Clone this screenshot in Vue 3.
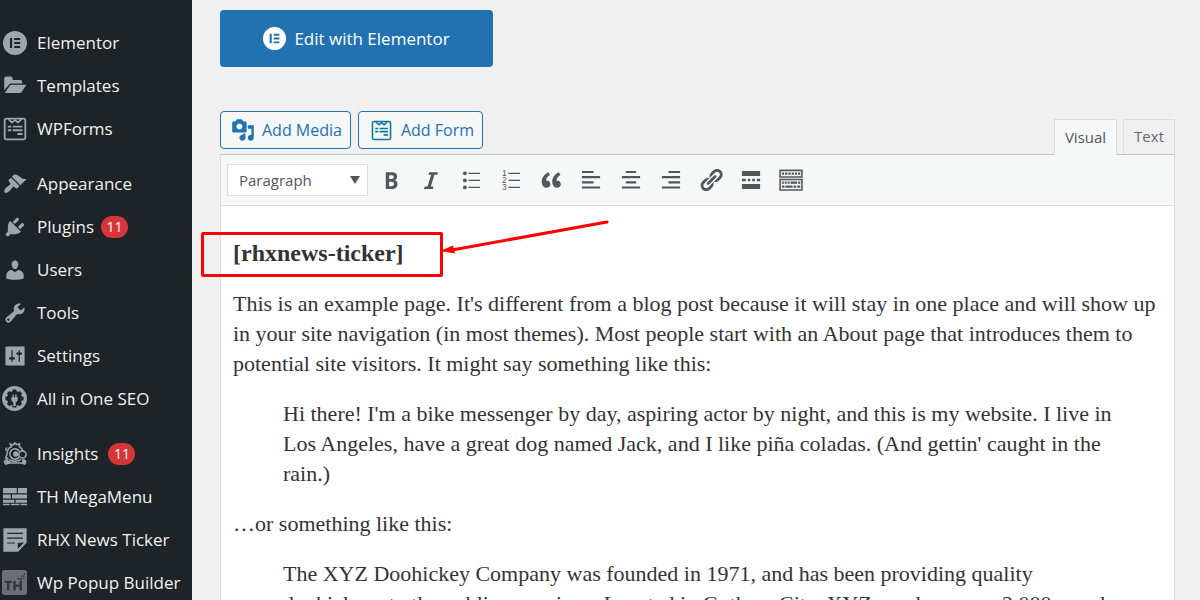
<script setup>
import { ref } from 'vue'

const menu = [
  [
    { label: 'Elementor', icon: 'elementor' },
    { label: 'Templates', icon: 'folder' },
    { label: 'WPForms', icon: 'form' },
  ],
  [
    { label: 'Appearance', icon: 'brush' },
    { label: 'Plugins', icon: 'plug', count: 11 },
    { label: 'Users', icon: 'user' },
    { label: 'Tools', icon: 'wrench' },
    { label: 'Settings', icon: 'sliders' },
    { label: 'All in One SEO', icon: 'seo' },
  ],
  [
    { label: 'Insights', icon: 'monster', count: 11, wide: true },
    { label: 'TH MegaMenu', icon: 'bricks' },
    { label: 'RHX News Ticker', icon: 'note' },
    { label: 'Wp Popup Builder', icon: 'th' },
  ],
]

const icons = {
  elementor:
    '<path fill-rule="evenodd" d="M10 0a10 10 0 1 0 0 20a10 10 0 0 0 0-20zM5.8 5.8h1.8v8.4H5.8zM9.3 5.8h5v1.7h-5zM9.3 9.1h5v1.7h-5zM9.3 12.5h5v1.7h-5z"/>',
  folder:
    '<path d="M1 13.5V3.6C1 2.7 1.7 2 2.6 2h3.8c.9 0 1.6.7 1.6 1.6V5h6.400c.9 0 1.600.7 1.600 1.600V8H7.200c-.9 0-1.700.4-2.300 1.100z"/><path d="M1.400 15.900L5.600 9.800c.4-.5.9-.8 1.600-.8H19.500L15.600 15c-.4.6-1 .9-1.700.9z"/>',
  form:
    '<rect x="1.400" y="1.400" width="17.200" height="17.200" rx="1.500" fill="none" stroke="currentColor" stroke-width="1.500"/><path fill="none" stroke="currentColor" stroke-width="1.400" d="M4.500 1.800l3 2.800L10 2.600l2.500 2 3-2.800"/><path d="M4 7.300h3v1.500H4zM8.200 7.300h8v1.500h-8zM4 10.300h3v1.500H4zM8.200 10.300h8v1.500h-8zM12 13.300h4.200v1.700H12z"/>',
  brush:
    '<path d="M14.480 11.060L7.410 3.990l1.500-1.500c.5-.56 2.300-.47 3.510.32 1.210.8 1.430 1.280 2.910 2.100 1.180.64 2.450 1.260 4.450.85zm-.71.71L6.700 4.700 4.930 6.470c-.39.39-.39 1.020 0 1.410l1.060 1.060c.39.39.39 1.030 0 1.420-.6.6-1.430 1.110-2.210 1.690-.35.26-.7.53-1.010.84C1.430 14.230.4 16.080 1.400 17.070c.99 1 2.840-.03 4.180-1.360.31-.31.58-.66.85-1.020.57-.78 1.080-1.610 1.690-2.210.39-.39 1.020-.39 1.410 0l1.060 1.060c.39.39 1.020.39 1.410 0z"/>',
  plug:
    '<path d="M13.110 4.360L9.870 7.600 8 5.730l3.240-3.240c.35-.34 1.050-.2 1.560.32.52.51.66 1.210.31 1.550zm-8 1.770l.91-1.120 9.010 9.010-1.190.84c-.71.71-2.630 1.160-3.820 1.160H6.140L4.900 17.260c-.59.59-1.540.59-2.120 0-.59-.58-.59-1.530 0-2.120l1.240-1.240v-3.880c0-1.130.4-3.190 1.090-3.890zm7.260 3.970l3.240-3.240c.34-.35 1.040-.21 1.550.31.52.51.66 1.210.31 1.550l-3.240 3.250z"/>',
  user:
    '<path d="M10 9.250c-2.270 0-2.730-3.440-2.730-3.440C7 4.020 7.820 2 9.970 2c2.160 0 2.980 2.020 2.710 3.810 0 0-.41 3.440-2.680 3.440zm0 2.570L12.720 10c2.390 0 4.520 2.330 4.520 4.530v2.490s-3.650 1.130-7.240 1.130c-3.650 0-7.240-1.130-7.240-1.130v-2.490c0-2.250 1.940-4.480 4.470-4.480z"/>',
  wrench:
    '<path fill-rule="evenodd" d="M16.680 9.770c-1.340 1.340-3.300 1.670-4.950.99l-5.410 6.520c-.99.99-2.590.99-3.580 0s-.99-2.590 0-3.570l6.520-5.420c-.68-1.650-.35-3.610.99-4.950 1.280-1.280 3.120-1.620 4.720-1.060l-2.890 2.890 2.820 2.820 2.860-2.870c.53 1.580.18 3.390-1.080 4.650zM3.810 16.210c.4.39 1.040.39 1.430 0 .4-.4.4-1.040 0-1.430-.39-.4-1.030-.4-1.430 0-.39.39-.39 1.030 0 1.430z"/>',
  sliders:
    '<path fill-rule="evenodd" d="M18 17V3c0-.6-.4-1-1-1H3c-.6 0-1 .4-1 1v14c0 .6.4 1 1 1h14c.6 0 1-.4 1-1zM8 11h1c.55 0 1 .45 1 1s-.45 1-1 1H8v1.500c0 .28-.22.5-.5.5s-.5-.22-.5-.5V13H6c-.55 0-1-.45-1-1s.45-1 1-1h1V5.500c0-.28.22-.5.5-.5s.5.22.5.5V11zm5-2h-1c-.55 0-1-.45-1-1s.45-1 1-1h1V5.500c0-.28.22-.5.5-.5s.5.22.5.5V7h1c.55 0 1 .45 1 1s-.45 1-1 1h-1v5.500c0 .28-.22.5-.5.5s-.5-.22-.5-.5V9z"/>',
  seo:
    '<circle cx="10" cy="10" r="10"/><g fill="#1d2327"><circle cx="10" cy="10" r="6"/><path d="M8.600 2.800h2.800l.5 3H8.100zM8.600 17.200h2.800l.5-3H8.100zM2.800 8.600v2.800l3 .5V8.100zM17.200 8.600v2.800l-3 .5V8.100zM3.900 5.900l2-2 2.500 1.800-2.700 2.700zM14.100 3.900l2 2-1.800 2.500-2.700-2.700zM3.900 14.100l2 2 2.500-1.800-2.700-2.700zM16.100 14.100l-2 2-2.500-1.800 2.700-2.700z"/></g><path d="M7.400 9h1V6.800h1V9h1.200V6.800h1V9h1v1.700c0 1.100-.7 1.900-1.600 2.200V16H9v-3.100c-.9-.3-1.600-1.100-1.600-2.200z"/>',
  monster:
    '<g fill="none" stroke="currentColor" stroke-width="1.300"><path d="M3.500 9.500C3.500 6.800 5 4.600 7 3.900L6 1.600l2.600.8L9.800.7l1.500 1.500 2.500-.7-.2 2.400c1.500.8 2.600 2 3 3.600M3.500 9.500l-1.200 3.700 1.500.5-2.600 2.500 1 2.200 3.500-.9h9.500l2.800.9.800-2.200-2-1.800"/><path d="M3 4.500l-.8 2.700M5 14.500c1.500 1.800 7 2.200 9.800.2"/><path d="M13.500 7.500a4.300 4.300 0 1 0 0 5"/><circle cx="16.200" cy="10.400" r="3"/></g><circle cx="10.600" cy="10" r="2.200"/><path d="M3 14.500l3.200 1.800-1.500 2H1.500zM15.500 14.500h2.800l1.200 3.400-3.200-.3z"/>',
  bricks:
    '<path d="M0 2.500h11.500v4.400H0zM12.500 2.500H20v4.400h-7.500zM0 7.900h6.500v3.300H0zM7.500 7.900H20v3.300H7.500zM0 12.200h9.500v2.600H0zM10.500 12.200H20v2.600h-9.500zM0 15.600h5.500v1.200H0zM6.500 15.600h7v1.200h-7zM14.500 15.600H20v1.200h-5.500z"/>',
  note:
    '<path fill-rule="evenodd" d="M.3.3h19.400v12L12.600 19.700H.3zM3.500 4v1h13V4zM3.500 8v1h13V8zM3.500 12v1h6.500v-1zM12.300 12.600v4.800l5.200-5.300z"/>',
  media:
    '<path fill-rule="evenodd" d="M13 11V4c0-.55-.45-1-1-1h-1.670L9 1H5L3.670 3H2c-.55 0-1 .45-1 1v7c0 .55.45 1 1 1h10c.55 0 1-.45 1-1zM7 4.500c1.380 0 2.500 1.120 2.500 2.500S8.380 9.500 7 9.500 4.500 8.380 4.500 7 5.620 4.500 7 4.500zM14 6h5v10.500c0 1.380-1.120 2.500-2.500 2.500S14 17.880 14 16.500s1.120-2.500 2.500-2.500c.17 0 .34.02.5.05V9h-3V6zm-4 8.050V13h2v3.500c0 1.380-1.120 2.500-2.500 2.500S7 17.880 7 16.500 8.120 14 9.500 14c.17 0 .34.02.5.05z"/>',
  th:
    '<rect width="20" height="20" rx="2.200" fill="#6d7073"/><path fill="#33383c" d="M2 8.500h6v1.800H6v6H4v-6H2zM9 8.500h2v3h3v-3h2v7.800h-2v-3h-3v3H9zM12.500 6h1.500v1.500h-1.500zM14.500 6.500H16V8h-1.500zM15.500 4h1.500v1.500h-1.500zM17.300 2.500h1.200v1.200h-1.200zM16.800 6h1.200v1.200h-1.200z"/>',
}

const tools = [
  { name: 'Bold', art: '<path fill-rule="evenodd" d="M6 4v13h4.540c1.370 0 2.460-.33 3.260-1 .8-.66 1.200-1.580 1.200-2.770 0-.84-.17-1.510-.51-2.010s-.9-.85-1.670-1.030v-.09c.57-.1 1.020-.4 1.360-.9s.51-1.130.51-1.910c0-1.140-.39-1.980-1.170-2.500C12.750 4.260 11.500 4 9.780 4H6zm2.570 5.150V6.260h1.360c.73 0 1.270.11 1.610.32.34.22.51.58.51 1.070 0 .54-.16.92-.47 1.150s-.82.35-1.510.35h-1.500zm0 2.190h1.600c1.440 0 2.160.53 2.160 1.610 0 .6-.17 1.050-.51 1.340s-.86.43-1.570.43H8.570v-3.380z"/>' },
  { name: 'Italic', art: '<path d="M14.780 6h-2.130l-2.800 9h2.120l-.62 2H4.600l.62-2h2.140l2.800-9H8.030l.62-2h6.750z"/>' },
  { name: 'Bulleted list', art: '<circle cx="5.300" cy="4.900" r="1.500"/><circle cx="5.300" cy="10.300" r="1.500"/><circle cx="5.300" cy="15.700" r="1.500"/><path d="M8 4.400h9v1H8zM8 9.800h9v1H8zM8 15.200h9v1H8z"/>' },
  { name: 'Numbered list', art: '<g font-family="Liberation Sans, sans-serif" font-size="6.500"><text x="3" y="7">1</text><text x="3" y="12.500">2</text><text x="3" y="18">3</text></g><path d="M8 4.400h9v1H8zM8 9.800h9v1H8zM8 15.200h9v1H8z"/>' },
  { name: 'Blockquote', art: '<path d="M9.490 13.220c0-.74-.2-1.380-.61-1.900-.62-.78-1.830-.88-2.530-.72-.29-1.650 1.110-3.750 2.920-4.650L7.880 4c-2.730 1.300-5.420 4.280-4.960 8.050C3.210 14.430 4.590 16 6.540 16c.85 0 1.560-.25 2.120-.75s.83-1.180.83-2.030zm8.050 0c0-.74-.2-1.380-.61-1.900-.63-.78-1.830-.88-2.530-.72-.29-1.650 1.110-3.750 2.920-4.650L15.930 4c-2.730 1.300-5.410 4.280-4.950 8.050.29 2.380 1.660 3.950 3.610 3.950.85 0 1.560-.25 2.120-.75s.83-1.180.83-2.030z"/>' },
  { name: 'Align left', art: '<path d="M3 3h9v1.600H3zM3 7h14v1.600H3zM3 11h9v1.600H3zM3 15h14v1.600H3z"/>' },
  { name: 'Align center', art: '<path d="M6 3h8v1.600H6zM3 7h14v1.600H3zM6 11h8v1.600H6zM3 15h14v1.600H3z"/>' },
  { name: 'Align right', art: '<path d="M8 3h9v1.600H8zM3 7h14v1.600H3zM8 11h9v1.600H8zM3 15h14v1.600H3z"/>' },
  { name: 'Insert link', art: '<path fill-rule="evenodd" d="M17.740 2.760c1.680 1.690 1.680 4.410 0 6.100l-1.530 1.520c-1.120 1.120-2.700 1.470-4.140 1.090l2.620-2.610.76-.77.76-.76c.84-.84.84-2.200 0-3.040-.84-.85-2.200-.85-3.040 0l-.77.76-3.380 3.380c-.37-1.440-.02-3.020 1.100-4.140l1.520-1.530c1.690-1.680 4.420-1.680 6.100 0zM8.590 13.430l5.340-5.340c.42-.42.42-1.100 0-1.520-.44-.43-1.130-.39-1.530 0l-5.330 5.340c-.42.42-.42 1.100 0 1.520.44.43 1.130.39 1.520 0zm-.76 2.290l4.140-4.150c.38 1.440.03 3.020-1.090 4.140l-1.520 1.530c-1.690 1.680-4.410 1.680-6.100 0-1.680-1.680-1.680-4.420 0-6.100l1.530-1.520c1.120-1.120 2.700-1.470 4.140-1.100l-4.140 4.150c-.85.84-.85 2.200 0 3.050.84.84 2.200.84 3.040 0z"/>' },
  { name: 'Read more', art: '<path d="M3 3h14v4H3zM3 9h3v2H3zM7.500 9h2v2h-2zM11 9h2v2h-2zM14.500 9H17v2h-2.500zM3 13h14v4H3z"/>' },
  { name: 'Toggle toolbar', art: '<path fill-rule="evenodd" d="M1 2h18v6.300H1zM2.200 3.200v3.900h15.600V3.200zM1 9h18v9.300H1zM2.200 10.200v6.900h15.600v-6.900z"/><path d="M3 4.200h1.700v1.700H3zM5.500 4.200h1.700v1.700H5.500zM8 4.200h1.700v1.700H8zM10.500 4.200h1.700v1.700h-1.700zM13 4.200h1.700v1.700H13zM15.400 4.200h1.700v1.700h-1.700zM3 11.200h1.500v1.700H3zM5.200 11.200h1.500v1.700H5.200zM7.400 11.200h1.500v1.700H7.400zM9.600 11.200h5.200v1.700H9.600zM15.500 11.200h1.600v1.700h-1.600zM3 14.300h2v1.600H3zM5.700 14.300h5.500v1.600H5.700zM12 14.300h2v1.600h-2zM14.800 14.300h2.300v1.600h-2.300z"/>' },
]

const mode = ref('Visual')
const format = ref('Paragraph')
</script>

<template>
  <div class="shell">
    <nav class="sidebar" aria-label="Main menu">
      <ul v-for="(group, g) in menu" :key="g" class="group">
        <li v-for="item in group" :key="item.label">
          <a href="#" class="item">
            <svg class="item-icon" :class="{ large: item.icon === 'seo' || item.icon === 'th' }" viewBox="0 0 20 20" aria-hidden="true" v-html="icons[item.icon]"></svg>
            <span>{{ item.label }}</span>
            <span v-if="item.count" class="count" :class="{ spaced: item.wide }">{{ item.count }}</span>
          </a>
        </li>
      </ul>
    </nav>

    <main class="content">
      <button type="button" class="elementor">
        <svg viewBox="0 0 20 20" aria-hidden="true" v-html="icons.elementor"></svg>
        <span>Edit with Elementor</span>
      </button>

      <div class="editor-head">
        <div class="inserts">
          <button type="button" class="insert">
            <svg viewBox="0 0 20 20" aria-hidden="true" v-html="icons.media"></svg>
            <span>Add Media</span>
          </button>
          <button type="button" class="insert form">
            <svg viewBox="0 0 20 20" aria-hidden="true" v-html="icons.form"></svg>
            <span>Add Form</span>
          </button>
        </div>
        <div class="tabs">
          <button v-for="tab in ['Visual', 'Text']" :key="tab" type="button" class="tab" :class="{ active: mode === tab }" @click="mode = tab">{{ tab }}</button>
        </div>
      </div>

      <section class="editor">
        <div class="toolbar">
          <div class="format">
            <select v-model="format" aria-label="Text format">
              <option>Paragraph</option>
              <option>Heading 1</option>
              <option>Heading 2</option>
            </select>
            <svg class="caret" viewBox="0 0 10 8" aria-hidden="true"><path d="M0 0h10L5 8z" /></svg>
          </div>
          <button v-for="tool in tools" :key="tool.name" type="button" class="tool" :aria-label="tool.name">
            <svg viewBox="0 0 20 20" aria-hidden="true" v-html="tool.art"></svg>
          </button>
        </div>

        <article class="document">
          <p class="shortcode">
            <strong>[rhxnews-ticker]</strong>
            <span class="highlight"></span>
            <svg class="arrow" viewBox="0 0 170 36" aria-hidden="true">
              <path d="M12 31L167 3" fill="none" stroke="#f00" stroke-width="3" stroke-linecap="round" />
              <path d="M0 32L13 26.500L15 34.500z" fill="#f00" />
            </svg>
          </p>
          <p>This is an example page. It's different from a blog post because it will stay in one place and will show up in your site navigation (in most themes). Most people start with an About page that introduces them to potential site visitors. It might say something like this:</p>
          <blockquote>Hi there! I'm a bike messenger by day, aspiring actor by night, and this is my website. I live in Los Angeles, have a great dog named Jack, and I like piña coladas. (And gettin' caught in the rain.)</blockquote>
          <p>…or something like this:</p>
          <blockquote>The XYZ Doohickey Company was founded in 1971, and has been providing quality doohickeys to the public ever since. Located in Gotham City, XYZ employs over 2,000 people and does all kinds of awesome things for the Gotham community.</blockquote>
        </article>
      </section>
    </main>
  </div>
</template>

<style>
body {
  margin: 0;
  background: #f0f0f0;
}
</style>

<style scoped>
.shell {
  display: flex;
  height: 100vh;
  overflow: hidden;
  background: #f0f0f0;
  font-family: "Segoe UI", "Open Sans", "Noto Sans", sans-serif;
}

svg {
  display: block;
  flex: none;
  fill: currentColor;
}

button,
select {
  margin: 0;
  font-family: inherit;
}

.sidebar {
  flex: none;
  width: 192px;
  padding-top: 21px;
  box-sizing: border-box;
  background: #1d2327;
}

.group {
  margin: 0 0 12px;
  padding: 0;
  list-style: none;
}

.item {
  display: flex;
  align-items: center;
  height: 43px;
  padding-left: 3px;
  color: #f0f0f1;
  font-size: 17px;
  line-height: 24px;
  text-decoration: none;
  white-space: nowrap;
}

.item-icon {
  width: 24px;
  height: 24px;
  margin-right: 10px;
  color: #a0a5aa;
}

.item-icon.large {
  width: 25px;
  height: 25px;
  margin: 0 10px 0 -1px;
}

.count {
  min-width: 27px;
  margin-left: 7px;
  border-radius: 12px;
  background: #d63638;
  color: #fff;
  font-size: 14px;
  line-height: 22px;
  text-align: center;
}

.count.spaced {
  margin-left: 10px;
}

.content {
  flex: 1;
  min-width: 0;
  padding: 10px 25px 0 28px;
}

.elementor {
  display: flex;
  align-items: center;
  justify-content: center;
  gap: 8px;
  width: 273px;
  height: 57px;
  padding: 0;
  border: 0;
  border-radius: 4px;
  background: #2271b1;
  color: #fff;
  font-size: 17px;
}

.elementor svg {
  width: 23px;
  height: 23px;
}

.editor-head {
  display: flex;
  align-items: flex-end;
  justify-content: space-between;
  margin-top: 44px;
}

.inserts {
  display: flex;
  gap: 7px;
  padding-bottom: 5px;
}

.insert {
  display: flex;
  align-items: center;
  gap: 7px;
  height: 38px;
  padding: 0 8px 0 10px;
  border: 1px solid #2271b1;
  border-radius: 4px;
  background: #f6f7f7;
  color: #2271b1;
  font-size: 16px;
}

.insert svg {
  width: 24px;
  height: 24px;
}

.insert.form {
  gap: 9px;
  padding-left: 12px;
}

.insert.form svg {
  width: 21px;
  height: 21px;
  color: #0f76a0;
}

.tabs {
  display: flex;
  gap: 6px;
}

.tab {
  height: 35px;
  padding: 0 10px 2px;
  border: 1px solid #dcdcde;
  border-bottom: 0;
  background: #f0f0f0;
  color: #646970;
  font-size: 15px;
}

.tab.active {
  height: 36px;
  margin-bottom: -1px;
  background: #f6f7f7;
  color: #50575e;
  z-index: 1;
}

.editor {
  border: 1px solid #dcdcde;
  border-top-color: #c3c4c7;
  background: #fff;
}

.toolbar {
  display: flex;
  align-items: center;
  height: 50px;
  padding-left: 6px;
  border-bottom: 1px solid #dcdcde;
  background: #f6f7f7;
}

.format {
  display: grid;
  align-items: center;
  margin-right: 3px;
}

.format select {
  grid-area: 1 / 1;
  width: 141px;
  height: 32px;
  padding: 0 24px 0 11px;
  border: 1px solid #dcdcde;
  border-radius: 0;
  background: #fff;
  color: #50575e;
  font-size: 15px;
  appearance: none;
}

.caret {
  grid-area: 1 / 1;
  justify-self: end;
  width: 10px;
  height: 8px;
  margin-right: 8px;
  color: #50575e;
  pointer-events: none;
}

.tool {
  display: grid;
  place-items: center;
  width: 40px;
  height: 40px;
  padding: 0;
  border: 0;
  background: none;
  color: #50575e;
}

.tool svg {
  width: 26px;
  height: 26px;
}

.document {
  padding: 33px 12px 0;
  color: #333;
  font-family: Georgia, "Liberation Serif", serif;
  font-size: 22px;
  line-height: 30px;
}

.document p,
.document blockquote {
  margin: 0 0 20px;
}

.document blockquote {
  margin-left: 50px;
  margin-right: 40px;
}

.shortcode {
  position: relative;
}

.shortcode strong {
  font-size: 24px;
  line-height: 24px;
}

.highlight {
  position: absolute;
  top: -7px;
  left: -32px;
  box-sizing: border-box;
  width: 242px;
  height: 45px;
  border: 3px solid #f00;
  border-radius: 2px;
}

.arrow {
  position: absolute;
  top: -20px;
  left: 207px;
  width: 170px;
  height: 36px;
}
</style>
